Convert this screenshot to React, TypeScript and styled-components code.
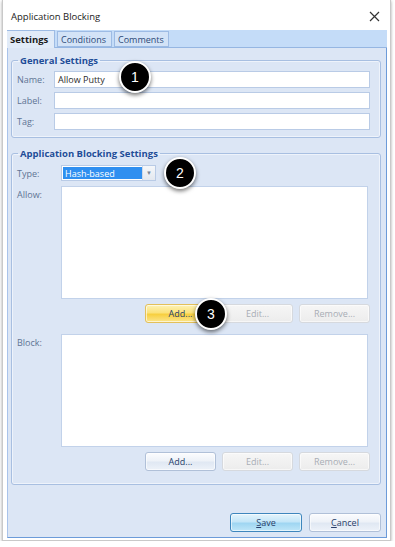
import styled, { createGlobalStyle } from "styled-components";

const GlobalStyle = createGlobalStyle`
  html, body {
    margin: 0;
    padding: 0;
    background: #ffffff;
  }
  body {
    font-family: "Open Sans", "Noto Sans", sans-serif;
    font-size: 9px;
  }
`;

const Frame = styled.div`
  position: relative;
  box-sizing: border-box;
  width: 389px;
  height: 541px;
  margin-left: 2px;
  padding: 0 3px 2px 4px;
  background: #ffffff;
  border: 1px solid #c9c9c9;
  border-top: none;
  box-shadow: 0 1px 3px rgba(0, 0, 0, 0.35);
  display: flex;
  flex-direction: column;
`;

const TitleBar = styled.div`
  height: 30px;
  display: flex;
  align-items: center;
  justify-content: space-between;
  padding: 2px 7px 0 4px;
  box-sizing: border-box;
  color: #222;
  font-size: 9.5px;
`;

const TabStrip = styled.div`
  height: 18px;
  display: flex;
  align-items: flex-end;
  gap: 2px;
  background: #c4dcf8;
  border-bottom: 1px solid #95b6e2;
  box-sizing: border-box;
`;

const Tab = styled.div<{ $active?: boolean; $w: number }>`
  width: ${(p) => p.$w}px;
  box-sizing: border-box;
  height: ${(p) => (p.$active ? 18 : 16)}px;
  margin-bottom: ${(p) => (p.$active ? -1 : 0)}px;
  display: flex;
  align-items: center;
  padding-left: 3px;
  font-weight: ${(p) => (p.$active ? 700 : 400)};
  font-size: ${(p) => (p.$active ? 9.5 : 9)}px;
  color: ${(p) => (p.$active ? "#1a1a1a" : "#2c4a78")};
  background: ${(p) => (p.$active ? "#e1ebf8" : "#d3e3f7")};
  border: 1px solid #9dbbe4;
  border-bottom: ${(p) => (p.$active ? "none" : "1px solid #9dbbe4")};
  border-left: ${(p) => (p.$active ? "none" : "1px solid #9dbbe4")};
`;

const Panel = styled.div`
  flex: 1;
  display: flex;
  flex-direction: column;
  background: #dce6f5;
  border-left: 1px solid #a9c3ea;
  border-right: 1px solid #6c9bd9;
  border-bottom: 1px solid #6c9bd9;
  padding: 6px 5px 5px 3px;
`;

const Group = styled.fieldset<{ $gap?: number; $pt: number; $pb: number }>`
  margin: 0 0 ${(p) => p.$gap ?? 0}px 0;
  padding: ${(p) => p.$pt}px 10px ${(p) => p.$pb}px 5px;
  border: 1px solid #a8bfe1;
  border-radius: 3px;
  box-shadow: inset 0 0 0 1px #eef3fb;
  min-width: 0;
`;

const Legend = styled.legend`
  margin-left: 1px;
  padding: 0 2px;
  font-weight: 700;
  font-size: 9.5px;
  color: #1f4d98;
`;

const FormGrid = styled.div<{ $label: number; $gap: number }>`
  display: grid;
  grid-template-columns: ${(p) => p.$label}px 1fr;
  row-gap: ${(p) => p.$gap}px;
  align-items: center;
`;

const Label = styled.div<{ $top?: boolean }>`
  color: #607494;
  align-self: ${(p) => (p.$top ? "start" : "center")};
  padding-top: ${(p) => (p.$top ? 2 : 0)}px;
`;

const TextBox = styled.div`
  position: relative;
  height: 17px;
  box-sizing: border-box;
  background: #fff;
  border: 1px solid #b9cbe6;
  display: flex;
  align-items: center;
  padding-left: 3px;
  color: #2b2b2b;
`;

const ListBox = styled.div`
  height: 113px;
  margin-right: 2px;
  background: #fff;
  border: 1px solid #c2d2ea;
  box-sizing: border-box;
`;

const Select = styled.div`
  position: relative;
  width: 95px;
  height: 16px;
  box-sizing: border-box;
  display: flex;
  border: 1px solid #b9cbe6;
  background: #fff;
`;

const SelectValue = styled.div`
  flex: 1;
  background: #2f8ff0;
  color: #fff;
  display: flex;
  align-items: center;
  padding-left: 2px;
  margin: 1px 0 1px 1px;
`;

const SelectArrow = styled.div`
  width: 12px;
  display: flex;
  align-items: center;
  justify-content: center;
  background: linear-gradient(#f5f7fa, #e3e8ef);
  border-left: 1px solid #cdd8e8;
  color: #7a8696;
  font-size: 6px;
`;

const ButtonRow = styled.div<{ $mb: number }>`
  position: relative;
  grid-column: 2;
  display: flex;
  justify-content: flex-end;
  gap: 6px;
  margin-bottom: ${(p) => p.$mb}px;
`;

type Tone = "normal" | "hover" | "disabled" | "default";

const Button = styled.div<{ $tone?: Tone; $w?: number }>`
  width: ${(p) => p.$w ?? 71}px;
  height: 19px;
  box-sizing: border-box;
  border-radius: 3px;
  display: flex;
  align-items: center;
  justify-content: center;
  font-size: 9px;
  border: 1px solid
    ${(p) =>
      p.$tone === "hover"
        ? "#e3c05a"
        : p.$tone === "disabled"
        ? "#d6d9de"
        : p.$tone === "default"
        ? "#3e86bd"
        : "#b0c0d8"};
  color: ${(p) => (p.$tone === "disabled" ? "#a8adb5" : "#283e6a")};
  background: ${(p) =>
    p.$tone === "hover"
      ? "linear-gradient(#fdf2b6 0%, #fbe27a 45%, #f7cf3f 55%, #fbe58c 100%)"
      : p.$tone === "disabled"
      ? "linear-gradient(#f6f6f6, #ececec)"
      : p.$tone === "default"
      ? "linear-gradient(#e4f4fc 0%, #c4e6f8 45%, #9fd6f2 55%, #bfe6f8 100%)"
      : "linear-gradient(#fbfcfe 0%, #eef2f8 45%, #e0e8f3 55%, #edf2f9 100%)"};
  box-shadow: inset 0 0 0 1px rgba(255, 255, 255, 0.6);

  u {
    text-decoration: underline;
  }
`;

const Footer = styled.div`
  margin-top: auto;
  display: flex;
  justify-content: flex-end;
  gap: 7px;
`;

const Badge = styled.div<{ $left: number; $top: number }>`
  position: absolute;
  left: ${(p) => p.$left}px;
  top: ${(p) => p.$top}px;
  width: 28px;
  height: 28px;
  border-radius: 50%;
  background: #000;
  border: 2px solid #fff;
  box-shadow: 0 2px 4px rgba(0, 0, 0, 0.55);
  color: #fff;
  display: flex;
  align-items: center;
  justify-content: center;
  font-family: "Liberation Sans", Arial, sans-serif;
  font-size: 14px;
  z-index: 2;
`;

const CloseIcon = () => (
  <svg width="11" height="11" viewBox="0 0 11 11">
    <path d="M1 1L10 10M10 1L1 10" stroke="#333" strokeWidth="1.2" fill="none" />
  </svg>
);

export default function App() {
  return (
    <>
      <GlobalStyle />
      <Frame>
        <TitleBar>
          <span>Application Blocking</span>
          <CloseIcon />
        </TitleBar>
        <TabStrip>
          <Tab $active $w={48}>Settings</Tab>
          <Tab $w={55}>Conditions</Tab>
          <Tab $w={55}>Comments</Tab>
        </TabStrip>
        <Panel>
          <Group $gap={9} $pt={4} $pb={7}>
            <Legend>General Settings</Legend>
            <FormGrid $label={37} $gap={4}>
              <Label>Name:</Label>
              <TextBox>
                Allow Putty
                <Badge $left={64} $top={-11}>1</Badge>
              </TextBox>
              <Label>Label:</Label>
              <TextBox />
              <Label>Tag:</Label>
              <TextBox />
            </FormGrid>
          </Group>
          <Group $pt={5} $pb={13}>
            <Legend>Application Blocking Settings</Legend>
            <FormGrid $label={44} $gap={5}>
              <Label>Type:</Label>
              <Select>
                <SelectValue>Hash-based</SelectValue>
                <SelectArrow>▼</SelectArrow>
                <Badge $left={102} $top={-9}>2</Badge>
              </Select>
              <Label $top>Allow:</Label>
              <ListBox />
              <ButtonRow $mb={6}>
                <Button $tone="hover">Add...</Button>
                <Button $tone="disabled">Edit...</Button>
                <Button $tone="disabled">Remove...</Button>
                <Badge $left={134} $top={-6}>3</Badge>
              </ButtonRow>
              <Label $top>Block:</Label>
              <ListBox />
              <ButtonRow $mb={0}>
                <Button>Add...</Button>
                <Button $tone="disabled">Edit...</Button>
                <Button $tone="disabled">Remove...</Button>
              </ButtonRow>
            </FormGrid>
          </Group>
          <Footer>
            <Button $tone="default" $w={72}>
              <span>
                <u>S</u>ave
              </span>
            </Button>
            <Button $w={72}>
              <span>
                <u>C</u>ancel
              </span>
            </Button>
          </Footer>
        </Panel>
      </Frame>
    </>
  );
}
